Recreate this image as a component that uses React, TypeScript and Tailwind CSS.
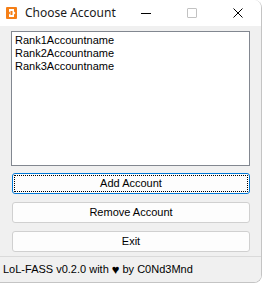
import { ReactNode } from 'react';

const ACCOUNTS = ['Rank1Accountname', 'Rank2Accountname', 'Rank3Accountname'];

function Button({ children, focused }: { children: ReactNode; focused?: boolean }) {
  return (
    <div
      className={
        focused
          ? 'h-[21px] rounded-[3px] border border-[#0078d7] bg-[#fdfdfd] p-[1px]'
          : 'h-[21px] rounded-[3px] border border-[#d0d0d0] bg-[#fdfdfd] p-[1px]'
      }
    >
      <div
        className={
          focused
            ? 'h-full flex items-center justify-center border border-dotted border-black rounded-[1px]'
            : 'h-full flex items-center justify-center'
        }
      >
        {children}
      </div>
    </div>
  );
}

export default function App() {
  return (
    <div className="w-[262px] h-[283px] bg-white">
      <div className="h-full flex flex-col overflow-hidden rounded-tr-[8px] rounded-br-[8px] border-r border-b border-[#c4c4c4] font-['Liberation_Sans',Arial,sans-serif] text-[11px] text-black">
        {/* title bar */}
        <div className="h-[26px] flex items-center bg-white shrink-0">
          <svg className="ml-[6px]" width="11" height="12" viewBox="0 0 11 12">
            <rect x="0" y="0" width="11" height="12" rx="1" fill="#f57f17" />
            <path d="M3 2h5v2.5l1.5 1.5-1.5 1.5V10H3V7.5L4.5 6 3 4.5z" fill="#fff" />
            <rect x="4.5" y="4" width="2" height="4" fill="#f57f17" />
          </svg>
          <span className="ml-[8px] text-[12px] font-['Noto_Sans',sans-serif] text-[#1a1a1a]">Choose Account</span>
          <div className="ml-auto flex h-full">
            <div className="w-[46px] flex items-center justify-center">
              <div className="w-[10px] h-[1px] bg-black" />
            </div>
            <div className="w-[46px] flex items-center justify-center">
              <div className="w-[10px] h-[10px] border border-[#c2c2c2] rounded-[1px]" />
            </div>
            <div className="w-[46px] flex items-center justify-center">
              <svg width="10" height="10" viewBox="0 0 10 10">
                <path d="M0.5 0.5L9.5 9.5M9.5 0.5L0.5 9.5" stroke="#000" strokeWidth="1" />
              </svg>
            </div>
          </div>
        </div>

        {/* body */}
        <div className="flex-1 bg-[#f0f0f0] flex flex-col">
          <div className="pl-[11px] pr-[11px] pt-[5px]">
            <div className="h-[135px] bg-white border border-[#828790] pl-[3px] pt-[2px] leading-[13px]">
              {ACCOUNTS.map((a) => (
                <div key={a}>{a}</div>
              ))}
            </div>
          </div>
          <div className="pl-[12px] pr-[11px] pt-[7px] flex flex-col gap-[8px]">
            <Button focused>Add Account</Button>
            <Button>Remove Account</Button>
            <Button>Exit</Button>
          </div>
        </div>

        {/* status bar */}
        <div className="h-[26px] shrink-0 bg-[#f0f0f0] border-t border-[#dadada] flex items-center pl-[3px]">
          LoL-FASS v0.2.0 with <span className="mx-[3px] text-[13px] leading-none">♥</span>by C0Nd3Mnd
        </div>
      </div>
    </div>
  );
}
